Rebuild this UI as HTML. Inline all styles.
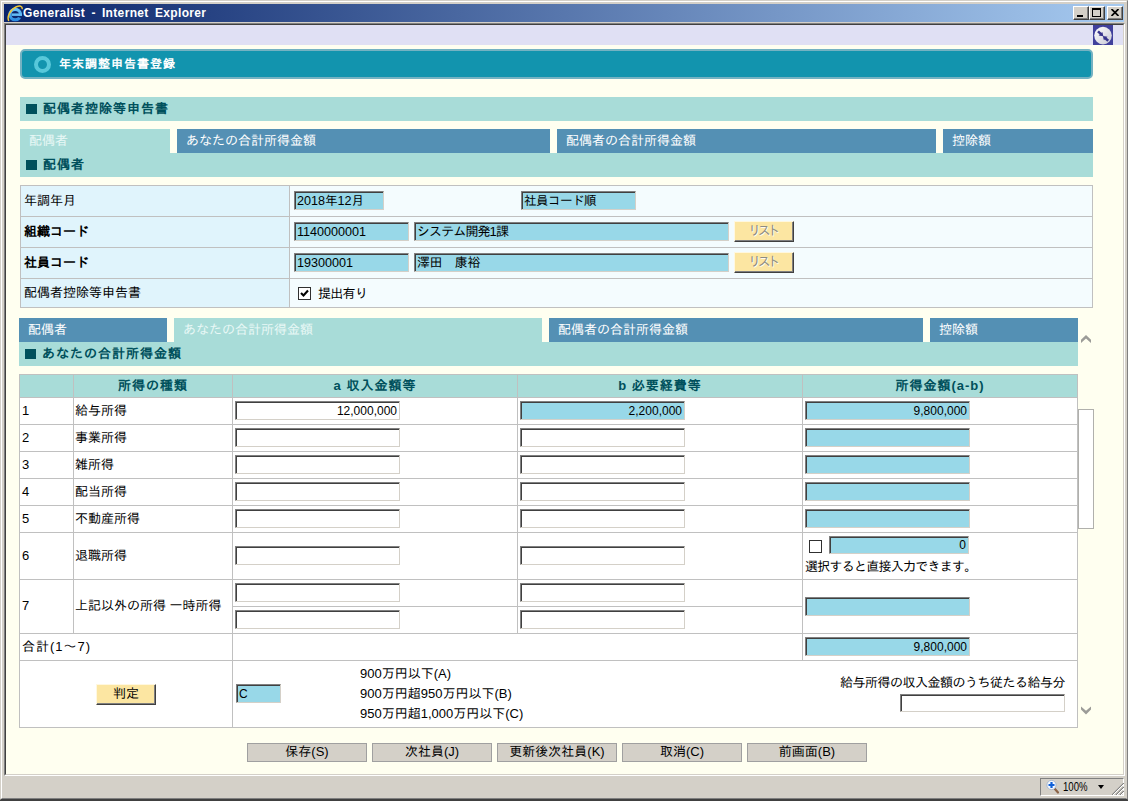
<!DOCTYPE html>
<html lang="ja">
<head>
<meta charset="utf-8">
<title>Generalist - Internet Explorer</title>
<style>
*{box-sizing:border-box;margin:0;padding:0}
html,body{width:1128px;height:801px;overflow:hidden;background:#404040}
body{font-family:"Liberation Sans","IPAGothic",sans-serif;font-size:13px;color:#000;position:relative}
.abs{position:absolute}
#win{position:absolute;left:0;top:0;width:1128px;height:800px;background:#d4d0c8;
  border-top:1px solid #d4d0c8;border-left:1px solid #d4d0c8;border-right:1px solid #808080;border-bottom:1px solid #404040}
#win:before{content:"";position:absolute;left:0;top:0;right:0;bottom:0;border-top:1px solid #fff;border-left:1px solid #fff;border-right:1px solid #d4d0c8;border-bottom:1px solid #808080}
#title{position:absolute;left:4px;top:4px;width:1120px;height:18px;background:linear-gradient(to right,#0a246a 0%,#a6caf0 100%);color:#fff;font-weight:bold;font-size:12px;line-height:18px;white-space:nowrap}
#title span{position:absolute;left:19px;top:0;letter-spacing:.35px;word-spacing:2.5px;font-family:"Liberation Sans","IPAGothic",sans-serif}
.wb{position:absolute;top:2px;width:16px;height:14px;background:#d4d0c8;border-top:1px solid #fff;border-left:1px solid #fff;border-right:1px solid #404040;border-bottom:1px solid #404040;box-shadow:inset -1px -1px 0 #808080}
#client{position:absolute;left:4px;top:23px;width:1121px;height:753px;border-top:1px solid #808080;border-left:1px solid #808080;border-right:1px solid #fff;border-bottom:1px solid #fff;background:#fffff0}
#client:before{content:"";position:absolute;left:0;top:0;right:0;bottom:0;border-top:1px solid #404040;border-left:1px solid #404040;border-right:1px solid #d4d0c8;border-bottom:1px solid #d4d0c8;pointer-events:none;z-index:5}
#page{position:absolute;left:6px;top:25px;width:1117px;height:749px;background:#fffff0;overflow:hidden}
#lav{position:absolute;left:0;top:0;width:1117px;height:20px;background:#e0e0f4}
#hdr{position:absolute;left:14px;top:24px;width:1073px;height:30px;background:#1294ae;border:2px solid #74b2c2;border-radius:5px;color:#fff;font-weight:bold;font-size:12px;line-height:26px}
.sec{position:absolute;background:#a8dcd8;color:#00505c;font-weight:bold;font-size:13px;line-height:23px;white-space:nowrap}
.sec i{position:absolute;left:6px;top:7px;width:11px;height:10px;background:#00505c}
.sec span{position:absolute;left:23px;top:0;letter-spacing:1px}
.tab{position:absolute;height:24px;background:#5490b4;color:#fff;font-size:13px;line-height:24px;white-space:nowrap;padding-left:9px}
.tab.on{background:#a8dcd8;color:#e8f8f6}

table{border-collapse:collapse;position:absolute;table-layout:fixed}
td,th{border:1px solid #c0c0c0;font-size:13px;white-space:nowrap;vertical-align:middle;padding:0;position:relative}
#t1 td.l{background:#e0f4fc;padding-left:4px}
#t1 td.v{background:#f4fcfe}
#t1 .in{font-size:12.6px;line-height:16px}
#t1 td.l{padding-left:3px;padding-bottom:2px}
.in{position:absolute;height:19px;background:#fff;border-top:1px solid #808080;border-left:1px solid #808080;border-right:1px solid #d4d0c8;border-bottom:1px solid #d4d0c8;box-shadow:inset 1px 1px 0 0 #404040;padding:1px 1px 0 2px;font-size:12px;line-height:15px;white-space:nowrap;overflow:hidden}
.in.b{background:#98d8e8}
.in.r{text-align:right;padding-right:2px}
.lb{position:absolute;width:60px;height:21px;background:#fce6a2;border-top:1px solid #fff8e0;border-left:1px solid #fff8e0;border-right:1px solid #404040;border-bottom:1px solid #404040;box-shadow:inset -1px -1px 0 #808080;color:#8c8c84;text-shadow:1px 1px 0 #fffcf0;font-size:13px;line-height:17px;text-align:center;letter-spacing:-3.4px;text-indent:-3px}
.cb{position:absolute;width:13px;height:13px;background:#fff;border:1px solid #303030}
#t2 th{background:#a8dcd8;color:#00505c;font-weight:bold;font-size:13px;letter-spacing:1px}
#t2 td{background:#fff}
#t2 .in{padding-top:2px}
#t2 td.n{padding-left:2px;padding-bottom:2px}
#t2 td.n+td.n{padding-left:1px}
#t2 th{padding-bottom:2px}
.btn{position:absolute;top:718px;width:120px;height:19px;background:#d4d0c8;border:1px solid #a0a0a0;font-size:13px;line-height:16px;text-align:center}
#status{position:absolute;left:4px;top:776px;width:1120px;height:22px;background:#d4d0c8}
#zp{position:absolute;left:1036px;top:2px;width:84px;height:18px;border-top:1px solid #808080;border-left:1px solid #808080;border-right:1px solid #fff;border-bottom:1px solid #fff}
</style>
</head>
<body>
<div id="win">
</div>
<div id="title"><span>Generalist - Internet Explorer</span>
  <div class="wb" style="left:1069px"><i style="position:absolute;left:3px;top:8px;width:6px;height:2px;background:#000"></i></div>
  <div class="wb" style="left:1085px"><i style="position:absolute;left:2px;top:1px;width:9px;height:9px;border:1px solid #000;border-top-width:2px"></i></div>
  <div class="wb" style="left:1103px"><svg width="8" height="7" viewBox="0 0 8 7" style="position:absolute;left:3px;top:2px"><path d="M0.5 0 L7.5 7 M7.5 0 L0.5 7" stroke="#000" stroke-width="1.7" fill="none"/></svg></div>
  <svg id="ie" width="18" height="18" viewBox="0 0 18 18" style="position:absolute;left:1.5px;top:0">
    <defs><linearGradient id="eg" x1="0" y1="0" x2="0" y2="1"><stop offset="0" stop-color="#6cc4f8"/><stop offset="1" stop-color="#2c8ce0"/></linearGradient></defs>
    <ellipse cx="9.2" cy="10.6" rx="5.3" ry="5.2" fill="none" stroke="url(#eg)" stroke-width="3.1"/>
    <rect x="5.6" y="9.4" width="10.4" height="2.5" fill="#64bcf4"/>
    <path d="M10.6 11.9 L16.6 11.9 L16.6 14.2 L13 13.4 Z" fill="#0c2870"/>
    <path d="M2.6 16.4 C0.8 12.6 4.4 5.2 10.4 2.7 C13.8 1.4 16.4 2 16.2 4.6" fill="none" stroke="#f0c838" stroke-width="1.5" stroke-linecap="round"/>
  </svg>
</div>
<div id="client"></div>
<div id="page">
  <div id="lav"></div>
  <svg width="20" height="20" viewBox="0 0 20 20" style="position:absolute;left:1087px;top:0">
    <rect width="20" height="20" fill="#40409c"/>
    <defs><linearGradient id="cg" x1="0" y1="0" x2="1" y2="1"><stop offset="0" stop-color="#ffffff"/><stop offset="1" stop-color="#c8c8d4"/></linearGradient></defs>
    <circle cx="10" cy="10.6" r="8.8" fill="url(#cg)"/>
    <path d="M5 6.4 L8.6 9.6" stroke="#38348c" stroke-width="2.6" fill="none"/><path d="M10.4 11.3 L5.6 10.5 L9.3 7 Z" fill="#38348c"/>
    <path d="M15.2 15.8 L11.6 12.6" stroke="#38348c" stroke-width="2.6" fill="none"/><path d="M9.8 10.9 L14.6 11.7 L10.9 15.2 Z" fill="#38348c"/>
  </svg>
  <div id="hdr"><i style="position:absolute;left:11.5px;top:4.5px;width:17px;height:17px;border-radius:50%;border:4.6px solid #58c8da"></i><span style="position:absolute;left:37px;top:0;letter-spacing:1px">年末調整申告書登録</span></div>

  <div class="sec" style="left:14px;top:72px;width:1073px;height:24px"><i></i><span>配偶者控除等申告書</span></div>

  <div class="tab on" style="left:14px;top:104px;width:150px">配偶者</div>
  <div class="tab" style="left:171px;top:104px;width:373px">あなたの合計所得金額</div>
  <div class="tab" style="left:551px;top:104px;width:379px">配偶者の合計所得金額</div>
  <div class="tab" style="left:937px;top:104px;width:150px">控除額</div>
  <div class="sec" style="left:14px;top:128px;width:1073px;height:24px"><i></i><span>配偶者</span></div>

  <table id="t1" style="left:14px;top:160px;width:1073px">
    <colgroup><col style="width:269px"><col></colgroup>
    <tr style="height:31px"><td class="l">年調年月</td><td class="v">
      <div class="in b" style="left:4px;top:5px;width:90px">2018年12月</div>
      <div class="in b" style="left:231px;top:5px;width:115px;letter-spacing:-.6px">社員コード順</div></td></tr>
    <tr style="height:31px"><td class="l" style="font-weight:bold">組織コード</td><td class="v">
      <div class="in b" style="left:4px;top:5px;width:115px">1140000001</div>
      <div class="in b" style="left:124px;top:5px;width:315px;font-size:13px;letter-spacing:-.9px">システム開発1課</div>
      <div class="lb" style="left:444px;top:4px">リスト</div></td></tr>
    <tr style="height:31px"><td class="l" style="font-weight:bold">社員コード</td><td class="v">
      <div class="in b" style="left:4px;top:5px;width:115px">19300001</div>
      <div class="in b" style="left:124px;top:5px;width:315px;font-size:13px;letter-spacing:-.4px">澤田　康裕</div>
      <div class="lb" style="left:444px;top:4px">リスト</div></td></tr>
    <tr style="height:29px"><td class="l">配偶者控除等申告書</td><td class="v">
      <div class="cb" style="left:8px;top:8px"><svg width="11" height="11" viewBox="0 0 11 11" style="position:absolute;left:0;top:0"><path d="M2 5 L4.5 7.5 L9 2.5" fill="none" stroke="#000" stroke-width="2.1"/></svg></div>
      <span style="position:absolute;left:28px;top:7px;line-height:15px;letter-spacing:-.7px">提出有り</span></td></tr>
  </table>

  <div class="tab" style="left:13px;top:293px;width:148px">配偶者</div>
  <div class="tab on" style="left:168px;top:293px;width:368px">あなたの合計所得金額</div>
  <div class="tab" style="left:543px;top:293px;width:374px">配偶者の合計所得金額</div>
  <div class="tab" style="left:924px;top:293px;width:148px">控除額</div>
  <div class="sec" style="left:13px;top:317px;width:1059px;height:24px"><i></i><span>あなたの合計所得金額</span></div>

  <table id="t2" style="left:13px;top:349px;width:1059px">
    <colgroup><col style="width:54px"><col style="width:159px"><col style="width:285px"><col style="width:285px"><col></colgroup>
    <tr style="height:23px"><th></th><th>所得の種類</th><th>a 収入金額等</th><th>b 必要経費等</th><th>所得金額(a-b)</th></tr>
    <tr style="height:27px"><td class="n">1</td><td class="n">給与所得</td><td><div class="in r" style="left:2px;top:3px;width:165px">12,000,000</div></td><td><div class="in b r" style="left:2px;top:3px;width:165px">2,200,000</div></td><td><div class="in b r" style="left:2px;top:3px;width:165px">9,800,000</div></td></tr>
    <tr style="height:27px"><td class="n">2</td><td class="n">事業所得</td><td><div class="in" style="left:2px;top:3px;width:165px"></div></td><td><div class="in" style="left:2px;top:3px;width:165px"></div></td><td><div class="in b" style="left:2px;top:3px;width:165px"></div></td></tr>
    <tr style="height:27px"><td class="n">3</td><td class="n">雑所得</td><td><div class="in" style="left:2px;top:3px;width:165px"></div></td><td><div class="in" style="left:2px;top:3px;width:165px"></div></td><td><div class="in b" style="left:2px;top:3px;width:165px"></div></td></tr>
    <tr style="height:27px"><td class="n">4</td><td class="n">配当所得</td><td><div class="in" style="left:2px;top:3px;width:165px"></div></td><td><div class="in" style="left:2px;top:3px;width:165px"></div></td><td><div class="in b" style="left:2px;top:3px;width:165px"></div></td></tr>
    <tr style="height:27px"><td class="n">5</td><td class="n">不動産所得</td><td><div class="in" style="left:2px;top:3px;width:165px"></div></td><td><div class="in" style="left:2px;top:3px;width:165px"></div></td><td><div class="in b" style="left:2px;top:3px;width:165px"></div></td></tr>
    <tr style="height:47px"><td class="n">6</td><td class="n">退職所得</td><td><div class="in" style="left:2px;top:13px;width:165px"></div></td><td><div class="in" style="left:2px;top:13px;width:165px"></div></td><td>
      <div class="cb" style="left:6px;top:7px"></div><div class="in b r" style="left:26px;top:3px;width:140px;height:18px;padding-top:1px">0</div>
      <span style="position:absolute;left:2px;top:26px;line-height:15px;letter-spacing:-.75px">選択すると直接入力できます。</span></td></tr>
    <tr style="height:27px"><td class="n" rowspan="2">7</td><td class="n" rowspan="2">上記以外の所得 一時所得</td><td><div class="in" style="left:2px;top:3px;width:165px"></div></td><td><div class="in" style="left:2px;top:3px;width:165px"></div></td><td rowspan="2"><div class="in b" style="left:2px;top:17px;width:165px"></div></td></tr>
    <tr style="height:27px"><td><div class="in" style="left:2px;top:3px;width:165px"></div></td><td><div class="in" style="left:2px;top:3px;width:165px"></div></td></tr>
    <tr style="height:27px"><td class="n" colspan="2" style="letter-spacing:1px">合計(1～7)</td><td colspan="2"></td><td><div class="in b r" style="left:2px;top:3px;width:165px">9,800,000</div></td></tr>
    <tr style="height:67px"><td colspan="2"><div class="lb" style="left:76px;top:23px;color:#000;text-shadow:none;letter-spacing:0;text-indent:0">判定</div></td><td colspan="3">
      <div class="in b" style="left:3px;top:23px;width:45px;height:19px">C</div>
      <span style="position:absolute;left:127px;top:5px;line-height:15px">900万円以下(A)</span>
      <span style="position:absolute;left:127px;top:25px;line-height:15px">900万円超950万円以下(B)</span>
      <span style="position:absolute;left:127px;top:45px;line-height:15px">950万円超1,000万円以下(C)</span>
      <span style="position:absolute;right:12px;top:14px;line-height:15px;letter-spacing:-.5px">給与所得の収入金額のうち従たる給与分</span>
      <div class="in" style="right:12px;top:33px;width:165px;height:18px"></div>
    </td></tr>
  </table>

  <div style="position:absolute;left:1072px;top:384px;width:16px;height:120px;background:#fff;border:1px solid #b0b0ac"></div>
  <svg width="16" height="10" viewBox="0 0 16 10" style="position:absolute;left:1072px;top:309px"><path d="M3 9 L3 5.8 L8 0.9 L13 5.8 L13 9 L8 4.6 Z" fill="#9c9c98"/></svg>
  <svg width="16" height="10" viewBox="0 0 16 10" style="position:absolute;left:1072px;top:680px"><path d="M3 1.4 L3 4.6 L8 9.4 L13 4.6 L13 1.4 L8 5.8 Z" fill="#9c9c98"/></svg>
  <div class="btn" style="left:241px">保存(S)</div>
  <div class="btn" style="left:366px">次社員(J)</div>
  <div class="btn" style="left:491px">更新後次社員(K)</div>
  <div class="btn" style="left:616px">取消(C)</div>
  <div class="btn" style="left:741px">前画面(B)</div>
</div>
<div id="status">
  <div id="zp">
    <svg width="16" height="16" viewBox="0 0 16 16" style="position:absolute;left:4px;top:0">
      <path d="M9.5 9.5 L13 13.5" stroke="#8c6448" stroke-width="2.2" stroke-linecap="round"/>
      <circle cx="6.5" cy="6" r="4.6" fill="#f4f8ff" stroke="#a8b8d0" stroke-width="1"/>
      <path d="M6.5 3 V9 M3.5 6 H9.5" stroke="#1060d8" stroke-width="2.2"/>
    </svg>
    <span style="position:absolute;left:22px;top:0;font-size:12px;line-height:16px;display:inline-block;transform:scaleX(.8);transform-origin:left center">100%</span>
    <i style="position:absolute;left:57px;top:6px;width:0;height:0;border-left:3.5px solid transparent;border-right:3.5px solid transparent;border-top:4px solid #000"></i>
    <svg width="12" height="12" viewBox="0 0 12 12" style="position:absolute;left:71px;top:4px"><path d="M0 12 L12 0 M4 12 L12 4 M8 12 L12 8" stroke="#808080" stroke-width="1.2"/><path d="M1 12 L12 1 M5 12 L12 5 M9 12 L12 9" stroke="#fff" stroke-width="1"/></svg>
  </div>
</div>
</body>
</html>
